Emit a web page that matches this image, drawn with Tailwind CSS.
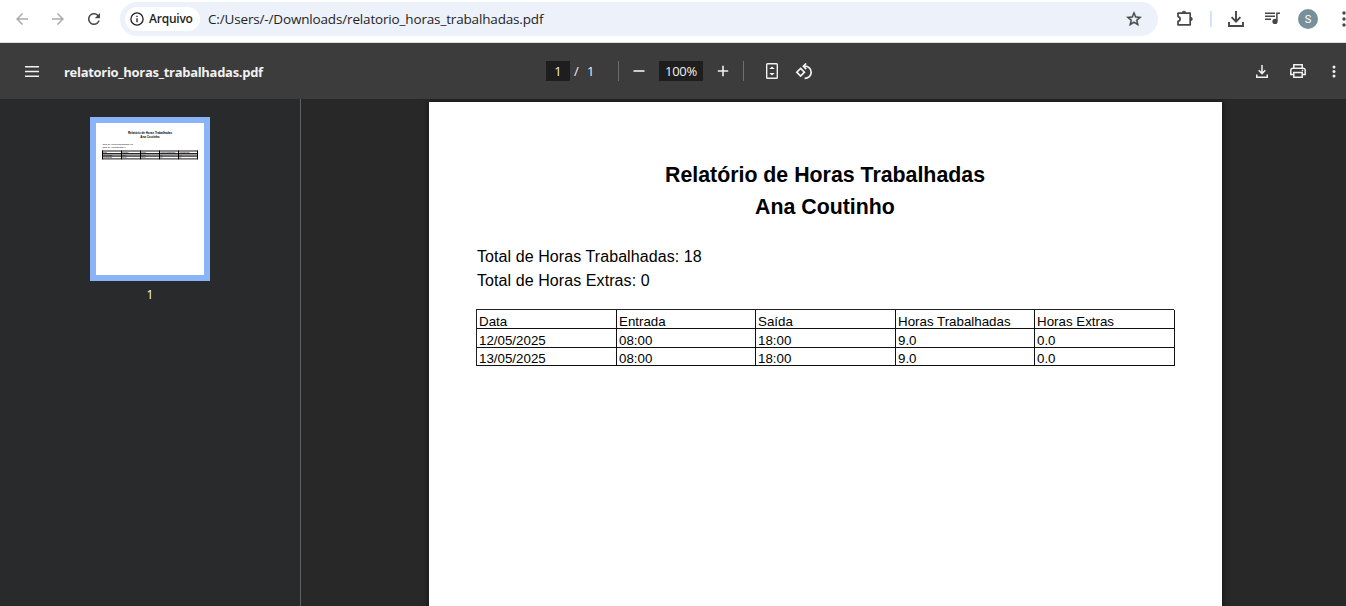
<!DOCTYPE html>
<html lang="pt-BR">
<head>
<meta charset="utf-8">
<title>relatorio_horas_trabalhadas.pdf</title>
<script src="https://cdn.jsdelivr.net/npm/@tailwindcss/browser@4"></script>
</head>
<body class="flex h-[606px] w-[1346px] flex-col overflow-hidden bg-white font-['Open_Sans','Noto_Sans',sans-serif]">

<!-- Browser address bar -->
<header class="flex h-[43px] shrink-0 items-start border-b border-[#dadce0] bg-white pt-0.5 pl-[13px] text-[#474747]">
  <div class="flex h-[34px] shrink-0 items-center gap-[18px]">
    <svg class="size-[18px] text-[#ababab]" viewBox="0 0 24 24" fill="currentColor"><path d="M20 11H7.83l5.59-5.59L12 4l-8 8 8 8 1.41-1.41L7.83 13H20v-2z"/></svg>
    <svg class="size-[18px] text-[#ababab]" viewBox="0 0 24 24" fill="currentColor"><path d="M12 4l-1.41 1.41L16.17 11H4v2h12.17l-5.58 5.59L12 20l8-8z"/></svg>
    <svg class="size-[18px]" viewBox="0 0 24 24" fill="currentColor"><path d="M17.65 6.35C16.2 4.9 14.21 4 12 4c-4.42 0-7.99 3.58-7.99 8s3.57 8 7.99 8c3.73 0 6.84-2.55 7.73-6h-2.08c-.82 2.33-3.04 4-5.65 4-3.31 0-6-2.69-6-6s2.69-6 6-6c1.66 0 3.14.69 4.22 1.78L13 11h7V4l-2.35 2.35z"/></svg>
  </div>
  <div class="ml-[17px] flex h-[34px] w-[1038px] shrink-0 items-center rounded-full bg-[#ecf1fa] pl-[5px] text-[#1f1f1f]">
    <div class="flex h-6 w-[75px] shrink-0 items-center rounded-full bg-white pl-[5px]">
      <svg class="size-[14px] shrink-0" viewBox="0 0 14 14" fill="none" stroke="currentColor" stroke-width="1.3"><circle cx="7" cy="7" r="6.1"/><path d="M7 6.2v4M7 3.7v1.4"/></svg>
      <span class="ml-[5px] text-xs font-semibold tracking-[-0.23px] whitespace-nowrap">Arquivo</span>
    </div>
    <span class="ml-2 text-[13.5px] tracking-[-0.16px] whitespace-nowrap">C:/Users/-/Downloads/relatorio_horas_trabalhadas.pdf</span>
    <svg class="mr-[15px] ml-auto size-[18px] text-[#474747]" viewBox="0 0 24 24" fill="currentColor" stroke="currentColor" stroke-width=".5"><path d="M22 9.24l-7.19-.62L12 2 9.19 8.63 2 9.24l5.46 4.73L5.82 21 12 17.27 18.18 21l-1.63-7.03L22 9.24zM12 15.4l-3.76 2.27 1-4.28-3.32-2.88 4.38-.38L12 6.1l1.71 4.04 4.38.38-3.32 2.88 1 4.28L12 15.4z"/></svg>
  </div>
  <div class="ml-[18px] flex h-[34px] shrink-0 items-center">
    <svg class="-mt-0.5 h-[18px] w-[18px]" viewBox="0 0 18 18" fill="none" stroke="currentColor" stroke-width="1.7" stroke-linejoin="round"><path d="M2 4.2H14.2V15.8H2V12.4C4.8 11.8 4.8 8.2 2 7.6Z"/><path d="M6.2 3.8a1.8 1.8 0 0 1 3.6 0zM14.6 8.2a1.8 1.8 0 0 1 0 3.6z" fill="currentColor" stroke-width=".6"/></svg>
    <span class="ml-4 h-4 w-0.5 bg-[#d3e3fd]"></span>
    <svg class="ml-4 h-4 w-4" viewBox="0 0 16 16" fill="none" stroke="currentColor" stroke-width="1.9"><path d="M8 0v10M3.6 6.2L8 10.6l4.4-4.4M1 11v4h14v-4"/></svg>
    <svg class="-mt-0.5 ml-5 h-[14px] w-[17px]" viewBox="0 0 17 14" fill="none" stroke="currentColor" stroke-width="1.5"><path d="M1 2.2h10M1 5.2h10M1 8.2h6M16 2.2h-3.1V10"/><circle cx="11" cy="10.4" r="2.6" fill="currentColor" stroke="none"/></svg>
    <span class="ml-[17px] flex size-5 items-center justify-center rounded-full bg-[#78909c] font-[Roboto,sans-serif] text-[11px] leading-none text-white">S</span>
    <svg class="ml-[24px] h-4 w-1 shrink-0" viewBox="0 0 4 16" fill="currentColor"><circle cx="2" cy="2" r="1.7"/><circle cx="2" cy="8" r="1.7"/><circle cx="2" cy="14" r="1.7"/></svg>
  </div>
</header>

<!-- PDF viewer toolbar -->
<div class="flex h-14 shrink-0 items-center bg-[#3c3c3c] pl-[25px] text-[13px] text-[#f1f1f1]">
  <svg class="h-[11px] w-[14px] shrink-0" viewBox="0 0 14 11" fill="currentColor"><path d="M0 0h14v1.6H0zM0 4.7h14v1.6H0zM0 9.4h14v1.6H0z"/></svg>
  <span class="ml-[25px] w-[482px] shrink-0 pt-[3px] font-bold tracking-[-0.3px] whitespace-nowrap">relatorio_horas_trabalhadas.pdf</span>
  <span class="flex h-5 w-6 shrink-0 items-center justify-center bg-[#1e1e1e] pt-0.5 font-medium">1</span>
  <span class="ml-1 w-[13px] shrink-0 pt-0.5 font-medium">/</span>
  <span class="w-[31px] shrink-0 pt-0.5 font-medium">1</span>
  <span class="h-5 w-px shrink-0 bg-[#6f6f6f]"></span>
  <svg class="ml-[14px] h-3 w-3 shrink-0" viewBox="0 0 12 12" fill="currentColor"><path d="M.5 5.2h11v1.6H.5z"/></svg>
  <span class="ml-[14px] flex h-5 w-11 shrink-0 items-center justify-center bg-[#1e1e1e] pt-0.5 font-medium tracking-[-0.3px]">100%</span>
  <svg class="ml-[14px] h-3 w-3 shrink-0" viewBox="0 0 12 12" fill="currentColor"><path d="M.8 5.2h4.4V.8h1.6v4.4h4.4v1.6H6.8v4.4H5.2V6.8H.8z"/></svg>
  <span class="ml-[14px] h-5 w-px shrink-0 bg-[#6f6f6f]"></span>
  <svg class="ml-[22px] h-4 w-3 shrink-0" viewBox="0 0 12 16" fill="none" stroke="currentColor" stroke-width="1.4"><rect x=".7" y=".7" width="10.6" height="14.6" rx=".8"/><path d="M6 3.4L8.800 6H3.200zM6 12.600l2.800-2.600H3.200z" fill="currentColor" stroke="none"/></svg>
  <svg class="ml-[17px] h-[17px] w-[18px] shrink-0" viewBox="0 0 18 17" fill="none" stroke="currentColor" stroke-width="1.7"><path d="M5.600 5.400L9.400 9.200 5.600 13 1.800 9.200z"/><path d="M9.200 3.200C13.500 3 16.200 5.800 16.200 9.200c0 3.600-2.800 6.200-6.600 6.100"/><path d="M11.200.5L8.400 3.200l2.800 2.900"/></svg>
  <svg class="ml-[443px] h-[13px] w-3 shrink-0" viewBox="0 0 12 13" fill="none" stroke="currentColor" stroke-width="1.5"><path d="M6 0v8.400M2.700 5.300L6 8.600l3.300-3.300M.75 9.400v2.800h10.500V9.400"/></svg>
  <svg class="ml-[22px] h-[14px] w-4 shrink-0" viewBox="0 0 16 14" fill="none" stroke="currentColor" stroke-width="1.5"><path d="M3.800 4.200V.8h8.400v3.400M3.800 10.500h-3V6.400a2.200 2.200 0 0 1 2.200-2.200h10a2.200 2.200 0 0 1 2.200 2.200v4.100h-3"/><path d="M3.800 8.500h8.400v4.700H3.800z"/><path d="M11.800 6.400h1.400"/></svg>
  <svg class="ml-[26px] h-[13px] w-1 shrink-0" viewBox="0 0 4 13" fill="currentColor"><circle cx="2" cy="1.900" r="1.500"/><circle cx="2" cy="6.500" r="1.500"/><circle cx="2" cy="11.100" r="1.500"/></svg>
</div>

<main class="flex h-[507px] shrink-0">
  <!-- Thumbnails -->
  <aside class="flex w-[301px] shrink-0 flex-col items-center border-r border-[#5f6163] bg-[#292a2c] pt-[18px]">
    <div class="h-[164px] w-[120px] border-[6px] border-[#8ab4f8] bg-white">
      <svg class="h-[152px] w-[108px] font-['Liberation_Sans',Arial,sans-serif]" viewBox="0 0 108 152" fill="#000">
        <g font-size="2.950" font-weight="700" text-anchor="middle"><text x="54" y="10.900">Relatório de Horas Trabalhadas</text><text x="54" y="15.200">Ana Coutinho</text></g>
        <g font-size="2.180"><text x="6.500" y="22">Total de Horas Trabalhadas: 18</text><text x="6.500" y="25.200">Total de Horas Extras: 0</text></g>
        <path d="M6 30.500h96v2.500H6z" fill="#aaa"/>
        <path d="M6 28h96M6 30.600h96M6 33.200h96M6 35.900h96" stroke="#000" stroke-width=".9"/>
        <path d="M6.500 27.500v8.800M25.500 27.500v8.800M44.500 27.500v8.800M63.500 27.500v8.800M82.500 27.500v8.800M101.500 27.500v8.800" stroke="#000" stroke-width="1"/>
        <g font-size="1.800">
          <text x="7" y="30.200">Data</text><text x="26" y="30.200">Entrada</text><text x="45" y="30.200">Saída</text><text x="64" y="30.200">Horas Trabalhadas</text><text x="83" y="30.200">Horas Extras</text>
          <text x="7" y="32.800">12/05/2025</text><text x="26" y="32.800">08:00</text><text x="45" y="32.800">18:00</text><text x="64" y="32.800">9.0</text><text x="83" y="32.800">0.0</text>
          <text x="7" y="35.300">13/05/2025</text><text x="26" y="35.300">08:00</text><text x="45" y="35.300">18:00</text><text x="64" y="35.300">9.0</text><text x="83" y="35.300">0.0</text>
        </g>
      </svg>
    </div>
    <span class="mt-1 text-xs leading-5 font-medium text-white">1</span>
  </aside>

  <!-- Document -->
  <section class="flex flex-1 overflow-hidden bg-[#282828] pt-[3px] pl-32">
    <article class="h-[1123px] w-[793px] shrink-0 bg-white pl-[47px] font-['Liberation_Sans',Arial,sans-serif] text-black shadow-[0_0_6px_rgba(0,0,0,.6)]">
      <h1 class="w-[698px] pt-[57px] text-center text-[21.33px] leading-8 font-bold">Relatório de Horas Trabalhadas<br>Ana Coutinho</h1>
      <div class="mt-[22px] pl-px text-base leading-6 tracking-[0.08px]">
        <p>Total de Horas Trabalhadas: 18</p>
        <p>Total de Horas Extras: 0</p>
      </div>
      <div class="mt-4 grid w-[698px] grid-cols-[140px_139px_140px_139px_140px] grid-rows-[19px_19px_18px] border-t border-l border-[#222] text-[13.33px] leading-[15px] *:overflow-visible *:border-r *:border-b *:border-[#111] *:pt-1 *:pl-0.5 *:whitespace-nowrap">
        <div>Data</div><div>Entrada</div><div>Saída</div><div>Horas Trabalhadas</div><div>Horas Extras</div>
        <div>12/05/2025</div><div>08:00</div><div>18:00</div><div>9.0</div><div>0.0</div>
        <div class="-mt-px">13/05/2025</div><div class="-mt-px">08:00</div><div class="-mt-px">18:00</div><div class="-mt-px">9.0</div><div class="-mt-px">0.0</div>
      </div>
    </article>
  </section>
</main>
</body>
</html>
